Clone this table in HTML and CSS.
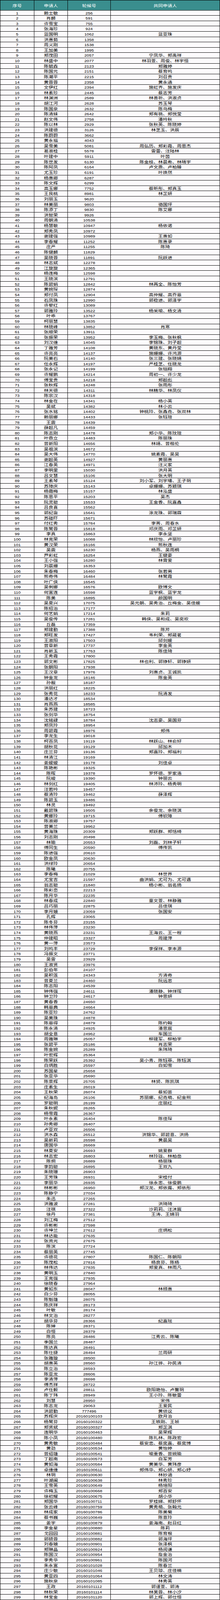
FILE: index.html
```html
<!DOCTYPE html>
<html lang="zh-CN">
<head>
<meta charset="utf-8">
<title>轮候名单</title>
<link rel="stylesheet" href="styles.css">
<script src="script.js"></script>
</head>
<body>
<table class="list">
<thead><tr><th>序号</th><th>申请人</th><th>轮候号</th><th>共同申请人</th></tr></thead>
<tbody>
<tr><td>1</td><td>赖士敏</td><td>256</td><td></td></tr>
<tr><td>2</td><td>肖麟</td><td>591</td><td></td></tr>
<tr><td>3</td><td>许雪宝</td><td>755</td><td></td></tr>
<tr><td>4</td><td>张海珍</td><td>924</td><td></td></tr>
<tr><td>5</td><td>蓝国明</td><td>1062</td><td>蓝亚珠</td></tr>
<tr><td>6</td><td>洪惠茹</td><td>1358</td><td></td></tr>
<tr><td>7</td><td>周义刚</td><td>1538</td><td></td></tr>
<tr><td>8</td><td>王加美</td><td>1995</td><td></td></tr>
<tr><td>9</td><td>郑茂田</td><td>2057</td><td>宁凤华、郑禹祥</td></tr>
<tr><td>10</td><td>林盛中</td><td>2077</td><td>林羽萱、周俊、林宇恒</td></tr>
<tr><td>11</td><td>陈毓森</td><td>2123</td><td>郑雅婷</td></tr>
<tr><td>12</td><td>陈国元</td><td>2151</td><td>蔡育鸣</td></tr>
<tr><td>13</td><td>陈潮平</td><td>2215</td><td>刘召贵</td></tr>
<tr><td>14</td><td>黄蓉蓉</td><td>2358</td><td>黄永通</td></tr>
<tr><td>15</td><td>文伊红</td><td>2394</td><td>施虹齐、施发庆</td></tr>
<tr><td>16</td><td>林素珍</td><td>2445</td><td>蔡志芳</td></tr>
<tr><td>17</td><td>林渊洲</td><td>2589</td><td>林善祈、洪淑贞</td></tr>
<tr><td>18</td><td>胡江河</td><td>2628</td><td>苏玉琴</td></tr>
<tr><td>19</td><td>陈国泉</td><td>2632</td><td>陈乌梅</td></tr>
<tr><td>20</td><td>陈清妹</td><td>2642</td><td>郑有祧、郑悦莹</td></tr>
<tr><td>21</td><td>赵文伟</td><td>2758</td><td>潘吟秋</td></tr>
<tr><td>22</td><td>陈以林</td><td>2929</td><td>张秋英、陈晓婷</td></tr>
<tr><td>23</td><td>洪建德</td><td>3126</td><td>林芝玉、洪辰</td></tr>
<tr><td>24</td><td>陈蔚蔚</td><td>3662</td><td></td></tr>
<tr><td>25</td><td>黄永福</td><td>4043</td><td></td></tr>
<tr><td>26</td><td>吴雪美</td><td>5081</td><td>周弘历、郑彩霞、周思杰</td></tr>
<tr><td>27</td><td>葛淑桂</td><td>5578</td><td>雷蕾、汪陆林</td></tr>
<tr><td>28</td><td>叶建中</td><td>5911</td><td>叶茵</td></tr>
<tr><td>29</td><td>陈世发</td><td>6130</td><td>陈金枝、林晨希、林晴宇</td></tr>
<tr><td>30</td><td>陈阿凤</td><td>6164</td><td>卢文质、卢柏臻</td></tr>
<tr><td>31</td><td>尤玉珍</td><td>6191</td><td>叶焕然</td></tr>
<tr><td>32</td><td>杨惠卿</td><td>6287</td><td></td></tr>
<tr><td>33</td><td>陈文辉</td><td>6299</td><td></td></tr>
<tr><td>34</td><td>高玉娜</td><td>7752</td><td>蔡昕彤、郑真玉</td></tr>
<tr><td>35</td><td>王艮桃</td><td>8981</td><td>林芷妍</td></tr>
<tr><td>36</td><td>刘丽玉</td><td>9620</td><td></td></tr>
<tr><td>37</td><td>林美丽</td><td>9803</td><td>骆国坪</td></tr>
<tr><td>38</td><td>陈添丁</td><td>9830</td><td>陈艾娜</td></tr>
<tr><td>39</td><td>洪智荣</td><td>9926</td><td></td></tr>
<tr><td>40</td><td>周朝清</td><td>10538</td><td></td></tr>
<tr><td>41</td><td>杨慧敏</td><td>10947</td><td>杨依诺</td></tr>
<tr><td>42</td><td>郑秀凤</td><td>10972</td><td></td></tr>
<tr><td>43</td><td>谢建强</td><td>10989</td><td>王惠如</td></tr>
<tr><td>44</td><td>李春耀</td><td>11252</td><td>陈惠录</td></tr>
<tr><td>45</td><td>庄严</td><td>11255</td><td>陈琦</td></tr>
<tr><td>46</td><td>陈健麟</td><td>11829</td><td></td></tr>
<tr><td>47</td><td>吴晓蓉</td><td>11891</td><td>阮跃进</td></tr>
<tr><td>48</td><td>林志斌</td><td>12278</td><td></td></tr>
<tr><td>49</td><td>江旋旋</td><td>12365</td><td></td></tr>
<tr><td>50</td><td>杨连梅</td><td>12598</td><td></td></tr>
<tr><td>51</td><td>王晓滨</td><td>12791</td><td></td></tr>
<tr><td>52</td><td>陈碧娟</td><td>12842</td><td>林两全、陈怡芳</td></tr>
<tr><td>53</td><td>黄婉琛</td><td>12874</td><td></td></tr>
<tr><td>54</td><td>郑付凤</td><td>12904</td><td>高仲耀、高乔恩</td></tr>
<tr><td>55</td><td>石凤珠</td><td>12990</td><td>郭稳进、郭泽宇</td></tr>
<tr><td>56</td><td>许黎红</td><td>13089</td><td></td></tr>
<tr><td>57</td><td>郭雅玲</td><td>13522</td><td>杨采喻、杨文清</td></tr>
<tr><td>58</td><td>叶乖</td><td>13767</td><td></td></tr>
<tr><td>59</td><td>柯丽慧</td><td>13835</td><td></td></tr>
<tr><td>60</td><td>林晓峰</td><td>13852</td><td>肖寒</td></tr>
<tr><td>61</td><td>张顺荣</td><td>13911</td><td></td></tr>
<tr><td>62</td><td>张振荣</td><td>13952</td><td>李玉梅、张秋枫</td></tr>
<tr><td>63</td><td>刘汉维</td><td>14045</td><td>李锦珠、刘子超</td></tr>
<tr><td>64</td><td>丁雅芳</td><td>14108</td><td>黄晓东、黄丹莹</td></tr>
<tr><td>65</td><td>许亮亮</td><td>14137</td><td>施姗姗、许鸿源</td></tr>
<tr><td>66</td><td>阮美石</td><td>14140</td><td>张三建、张晓婧</td></tr>
<tr><td>67</td><td>任永辉</td><td>14197</td><td>严桂芝、任晓龙</td></tr>
<tr><td>68</td><td>张永记</td><td>14199</td><td>张铠翔</td></tr>
<tr><td>69</td><td>许耀鹏</td><td>14214</td><td>周初一、许少龙</td></tr>
<tr><td>70</td><td>傅宝贵</td><td>14218</td><td>郑超彪</td></tr>
<tr><td>71</td><td>张秋辉</td><td>14248</td><td>张雨彤</td></tr>
<tr><td>72</td><td>林天德</td><td>14311</td><td>林精华、林凤仪</td></tr>
<tr><td>73</td><td>陈宗汉</td><td>14318</td><td></td></tr>
<tr><td>74</td><td>林金在</td><td>14341</td><td>杨小英</td></tr>
<tr><td>75</td><td>吴斌</td><td>14382</td><td>林小云</td></tr>
<tr><td>76</td><td>张水铭</td><td>14402</td><td>钟桃玲、张鑫垚、张双林</td></tr>
<tr><td>77</td><td>赖丽娜</td><td>14433</td><td>张钰瑄</td></tr>
<tr><td>78</td><td>王震</td><td>14439</td><td></td></tr>
<tr><td>79</td><td>薛超凡</td><td>14459</td><td></td></tr>
<tr><td>80</td><td>陈志刚</td><td>14478</td><td>郑小华、陈玟瑄</td></tr>
<tr><td>81</td><td>叶鼎立</td><td>14483</td><td>陈丽珠</td></tr>
<tr><td>82</td><td>曾新阳</td><td>14656</td><td>林靖、曾楷伦</td></tr>
<tr><td>83</td><td>吴祖滨</td><td>14672</td><td></td></tr>
<tr><td>84</td><td>吴大伟</td><td>14770</td><td>姚素霞、吴昊</td></tr>
<tr><td>85</td><td>谢超英</td><td>14927</td><td>黄丽惠</td></tr>
<tr><td>86</td><td>江春英</td><td>14971</td><td>汪义家</td></tr>
<tr><td>87</td><td>李明里</td><td>15030</td><td>洪月英</td></tr>
<tr><td>88</td><td>吕文慧</td><td>15106</td><td>张大明</td></tr>
<tr><td>89</td><td>王素琴</td><td>15124</td><td>刘小军、刘宇璠、王子玥</td></tr>
<tr><td>90</td><td>苏璋庆</td><td>15143</td><td>卓姗姗、苏颖琪</td></tr>
<tr><td>91</td><td>杨霜梅</td><td>15157</td><td>林泓盛</td></tr>
<tr><td>92</td><td>陈思平</td><td>15203</td><td>吴杰</td></tr>
<tr><td>93</td><td>阮灵聪</td><td>15533</td><td>王金香、阮嘉鑫</td></tr>
<tr><td>94</td><td>吕良喜</td><td>15562</td><td></td></tr>
<tr><td>95</td><td>郭纪畲</td><td>15641</td><td>涂龙珠、郭瑞霖</td></tr>
<tr><td>96</td><td>苏碰吓</td><td>15671</td><td></td></tr>
<tr><td>97</td><td>付红秀</td><td>15784</td><td>李菁、周春水</td></tr>
<tr><td>98</td><td>陈鹭蓉</td><td>15818</td><td>邓庆雨、邓芷妍</td></tr>
<tr><td>99</td><td>李真</td><td>15863</td><td>李永坚</td></tr>
<tr><td>100</td><td>林克荣</td><td>16088</td><td>林欣怡、卢丽珍</td></tr>
<tr><td>101</td><td>黄汉荣</td><td>16166</td><td>熊秋连</td></tr>
<tr><td>102</td><td>吴震</td><td>16230</td><td>杨燕、吴雨桐</td></tr>
<tr><td>103</td><td>芦彩虹</td><td>16254</td><td>王键豪</td></tr>
<tr><td>104</td><td>王小强</td><td>16280</td><td>林霄爱</td></tr>
<tr><td>105</td><td>刘晨姗</td><td>16353</td><td></td></tr>
<tr><td>106</td><td>朱春梅</td><td>16460</td><td>张若男</td></tr>
<tr><td>107</td><td>熊奇伟</td><td>16484</td><td>林鹭霞</td></tr>
<tr><td>108</td><td>叶广侠</td><td>16545</td><td></td></tr>
<tr><td>109</td><td>吴俐娜</td><td>16576</td><td>欧博文</td></tr>
<tr><td>110</td><td>何富连</td><td>16598</td><td>蓝宇枫、蓝宇龙</td></tr>
<tr><td>111</td><td>陈美</td><td>16895</td><td>颜国明</td></tr>
<tr><td>112</td><td>吴夏兴</td><td>17075</td><td>吴元朝、吴秀治、丘梅金、吴佳媛</td></tr>
<tr><td>113</td><td>陈招治</td><td>17177</td><td></td></tr>
<tr><td>114</td><td>何艺娟</td><td>17214</td><td>朱莉</td></tr>
<tr><td>115</td><td>吴俊传</td><td>17281</td><td>韩侠、吴和成、吴奕欢</td></tr>
<tr><td>116</td><td>丘磊</td><td>17359</td><td></td></tr>
<tr><td>117</td><td>郑建勤</td><td>17388</td><td>陈芹</td></tr>
<tr><td>118</td><td>郑旺发</td><td>17427</td><td>韦利荣、郑葳茗</td></tr>
<tr><td>119</td><td>王淑阳</td><td>17503</td><td>邱剑媛</td></tr>
<tr><td>120</td><td>曾章新</td><td>17737</td><td>李金英</td></tr>
<tr><td>121</td><td>肖新玉</td><td>17763</td><td>陈佳琦</td></tr>
<tr><td>122</td><td>王秀霞</td><td>17800</td><td></td></tr>
<tr><td>123</td><td>郭文彬</td><td>17825</td><td>林也利、郭铮轩、郭铮妍</td></tr>
<tr><td>124</td><td>张朝阳</td><td>17938</td><td></td></tr>
<tr><td>125</td><td>王汉章</td><td>17976</td><td>刘惠贞、王诚凯</td></tr>
<tr><td>126</td><td>钟金龙</td><td>18146</td><td>陈金英</td></tr>
<tr><td>127</td><td>孙靓</td><td>18187</td><td></td></tr>
<tr><td>128</td><td>洪丽红</td><td>18225</td><td></td></tr>
<tr><td>129</td><td>张秀花</td><td>18233</td><td>阮清发</td></tr>
<tr><td>130</td><td>潘达才</td><td>18534</td><td></td></tr>
<tr><td>131</td><td>肖燕燕</td><td>18585</td><td></td></tr>
<tr><td>132</td><td>朱苏建</td><td>18723</td><td></td></tr>
<tr><td>133</td><td>张剑华</td><td>18754</td><td></td></tr>
<tr><td>134</td><td>沈铭肆</td><td>18784</td><td>沈志豪、吴国芬</td></tr>
<tr><td>135</td><td>郑凤玲</td><td>18954</td><td></td></tr>
<tr><td>136</td><td>周碧霞</td><td>18976</td><td>郑伟</td></tr>
<tr><td>137</td><td>李龙生</td><td>19018</td><td></td></tr>
<tr><td>138</td><td>柯百凤</td><td>19119</td><td>林跃山、林俞好</td></tr>
<tr><td>139</td><td>胡秋花</td><td>19129</td><td>邱加木</td></tr>
<tr><td>140</td><td>庄兰芬</td><td>19136</td><td>郑嘉玲、郑福利</td></tr>
<tr><td>141</td><td>林清江</td><td>19169</td><td></td></tr>
<tr><td>142</td><td>姜嫒嫒</td><td>19178</td><td>刘佳卓</td></tr>
<tr><td>143</td><td>陈艳彬</td><td>19325</td><td></td></tr>
<tr><td>144</td><td>陈晖</td><td>19378</td><td>罗怀德、罗家浩</td></tr>
<tr><td>145</td><td>阮峻</td><td>19390</td><td>钟丽云</td></tr>
<tr><td>146</td><td>林剑红</td><td>19405</td><td>林沛玲、杨秀明</td></tr>
<tr><td>147</td><td>汪若吟</td><td>19457</td><td></td></tr>
<tr><td>148</td><td>蔡清玲</td><td>19462</td><td>薛泽辉</td></tr>
<tr><td>149</td><td>陈碧玉</td><td>19486</td><td></td></tr>
<tr><td>150</td><td>林灵</td><td>19492</td><td></td></tr>
<tr><td>151</td><td>戴碧珠</td><td>19505</td><td>余俊龙、余晓淇</td></tr>
<tr><td>152</td><td>黄娜玲</td><td>19715</td><td>傅钦障</td></tr>
<tr><td>153</td><td>陈淑卿</td><td>19757</td><td></td></tr>
<tr><td>154</td><td>曾美兰</td><td>19962</td><td></td></tr>
<tr><td>155</td><td>黄海珠</td><td>20309</td><td>郑跃群、郑恬绮</td></tr>
<tr><td>156</td><td>刘志刚</td><td>20498</td><td></td></tr>
<tr><td>157</td><td>林瑜</td><td>20553</td><td>刘磊、刘林子轩</td></tr>
<tr><td>158</td><td>傅同生</td><td>20590</td><td>傅传凯</td></tr>
<tr><td>159</td><td>陈进强</td><td>20610</td><td></td></tr>
<tr><td>160</td><td>欧金凤</td><td>20630</td><td></td></tr>
<tr><td>161</td><td>洪绿玲</td><td>20654</td><td></td></tr>
<tr><td>162</td><td>陈曦</td><td>20755</td><td></td></tr>
<tr><td>163</td><td>李春梅</td><td>21029</td><td>林世界</td></tr>
<tr><td>164</td><td>尤宝吉</td><td>21597</td><td>曲洪娟、尤可为、尤可遇</td></tr>
<tr><td>165</td><td>翁志聪</td><td>21840</td><td>杨小彬、翁名扬</td></tr>
<tr><td>166</td><td>陈彩恋</td><td>22213</td><td></td></tr>
<tr><td>167</td><td>陈月华</td><td>22235</td><td></td></tr>
<tr><td>168</td><td>林春成</td><td>22840</td><td>童文萱、林静雅</td></tr>
<tr><td>169</td><td>吕巧丽</td><td>22875</td><td>吕佳琪</td></tr>
<tr><td>170</td><td>李月娥</td><td>23059</td><td>张国安</td></tr>
<tr><td>171</td><td>孔辉</td><td>23065</td><td></td></tr>
<tr><td>172</td><td>陈冬芬</td><td>23155</td><td></td></tr>
<tr><td>173</td><td>林伟萍</td><td>23230</td><td></td></tr>
<tr><td>174</td><td>黄晓燕</td><td>23231</td><td>王海云、王一程</td></tr>
<tr><td>175</td><td>仲建昭</td><td>23327</td><td>周建萍</td></tr>
<tr><td>176</td><td>黄一萍</td><td>23573</td><td></td></tr>
<tr><td>177</td><td>刘鸣丰</td><td>23729</td><td>李保祥、李本源</td></tr>
<tr><td>178</td><td>冯振文</td><td>23771</td><td></td></tr>
<tr><td>179</td><td>吴雷</td><td>23929</td><td></td></tr>
<tr><td>180</td><td>王淑贤</td><td>23976</td><td></td></tr>
<tr><td>181</td><td>彭伯年</td><td>24107</td><td></td></tr>
<tr><td>182</td><td>吴积莲</td><td>24343</td><td>方清奇</td></tr>
<tr><td>183</td><td>曾夏兰</td><td>24460</td><td>阮远忠</td></tr>
<tr><td>184</td><td>陈志阳</td><td>24539</td><td></td></tr>
<tr><td>185</td><td>钟伟强</td><td>24611</td><td>潘晓静、钟烊珲</td></tr>
<tr><td>186</td><td>钟卫玲</td><td>24617</td><td>钟思妍</td></tr>
<tr><td>187</td><td>黄春香</td><td>24650</td><td></td></tr>
<tr><td>188</td><td>韩恩典</td><td>24664</td><td></td></tr>
<tr><td>189</td><td>陈亚珍</td><td>24762</td><td></td></tr>
<tr><td>190</td><td>吴美珠</td><td>24878</td><td></td></tr>
<tr><td>191</td><td>陈恩得</td><td>24879</td><td>陈约翰</td></tr>
<tr><td>192</td><td>陈永清</td><td>24925</td><td>潘思宸</td></tr>
<tr><td>193</td><td>胡全意</td><td>24962</td><td>车国兰</td></tr>
<tr><td>194</td><td>周雅琳</td><td>25057</td><td>柳建军、柳柏宇</td></tr>
<tr><td>195</td><td>张碧平</td><td>25186</td><td>肖志荣</td></tr>
<tr><td>196</td><td>陈金婉</td><td>25289</td><td>朱玮琦</td></tr>
<tr><td>197</td><td>叶宏辉</td><td>25364</td><td></td></tr>
<tr><td>198</td><td>陈荣跃</td><td>25392</td><td>吴小青、陈钰菲、陈钰淇</td></tr>
<tr><td>199</td><td>白炳胜</td><td>25597</td><td>白如雪</td></tr>
<tr><td>200</td><td>苏国星</td><td>25658</td><td></td></tr>
<tr><td>201</td><td>张亚华</td><td>25690</td><td></td></tr>
<tr><td>202</td><td>陈景辉</td><td>25705</td><td>林赟、陈凯琪</td></tr>
<tr><td>203</td><td>庄素生</td><td>26019</td><td></td></tr>
<tr><td>204</td><td>王秋荣</td><td>26074</td><td>蔡如芸</td></tr>
<tr><td>205</td><td>纪海岛</td><td>26106</td><td>苏丽娜、纪垚萌、纪金熙</td></tr>
<tr><td>206</td><td>罗聪明</td><td>26199</td><td>庄丽红</td></tr>
<tr><td>207</td><td>朱秋妮</td><td>26265</td><td></td></tr>
<tr><td>208</td><td>杨雪霞</td><td>26367</td><td></td></tr>
<tr><td>209</td><td>叶永素</td><td>26404</td><td>陈佳琛</td></tr>
<tr><td>210</td><td>孙秀卿</td><td>26407</td><td></td></tr>
<tr><td>211</td><td>卢亚双</td><td>26506</td><td></td></tr>
<tr><td>212</td><td>洪水森</td><td>26512</td><td>洪锦华、郭碧意、洪扬</td></tr>
<tr><td>213</td><td>吴新莉</td><td>26598</td><td>黄晨昊</td></tr>
<tr><td>214</td><td>唐国华</td><td>26669</td><td></td></tr>
<tr><td>215</td><td>林夏安</td><td>26693</td><td>姚爱群</td></tr>
<tr><td>216</td><td>林志宏</td><td>26803</td><td>林玲珑、林柏岳</td></tr>
<tr><td>217</td><td>陈炯</td><td>26889</td><td>杨丽珠</td></tr>
<tr><td>218</td><td>李韵聪</td><td>26895</td><td>王双九</td></tr>
<tr><td>219</td><td>朱晓珊</td><td>26903</td><td></td></tr>
<tr><td>220</td><td>王芳珠</td><td>26931</td><td>宋桂付</td></tr>
<tr><td>221</td><td>李丽华</td><td>26935</td><td>徐永忠、徐俊鹏</td></tr>
<tr><td>222</td><td>林彬彬</td><td>26950</td><td>郑汉龙、郑依露、郑依彤</td></tr>
<tr><td>223</td><td>陈静宁</td><td>27034</td><td></td></tr>
<tr><td>224</td><td>朱迅</td><td>27265</td><td></td></tr>
<tr><td>225</td><td>洪雅波</td><td>27281</td><td>洪琦琦</td></tr>
<tr><td>226</td><td>汪祺</td><td>27322</td><td>沙莉莉、汪沐宸</td></tr>
<tr><td>227</td><td>徐丹</td><td>27381</td><td>王涛、王婧羽</td></tr>
<tr><td>228</td><td>刘江梅</td><td>27512</td><td></td></tr>
<tr><td>229</td><td>许彬彬</td><td>27598</td><td></td></tr>
<tr><td>230</td><td>许坤兰</td><td>27612</td><td>庄炳松</td></tr>
<tr><td>231</td><td>林达能</td><td>27635</td><td></td></tr>
<tr><td>232</td><td>张资光</td><td>27675</td><td></td></tr>
<tr><td>233</td><td>陈滨</td><td>27724</td><td></td></tr>
<tr><td>234</td><td>蔡丽英</td><td>27745</td><td></td></tr>
<tr><td>235</td><td>许德花</td><td>27807</td><td>陈国仁、陈朝阳</td></tr>
<tr><td>236</td><td>陈茂松</td><td>27816</td><td>杨良芬、陈杨</td></tr>
<tr><td>237</td><td>林伟达</td><td>27835</td><td>郑爱真、林雨凡</td></tr>
<tr><td>238</td><td>黄明玉</td><td>27840</td><td></td></tr>
<tr><td>239</td><td>王克强</td><td>27935</td><td></td></tr>
<tr><td>240</td><td>徐晓春</td><td>27964</td><td></td></tr>
<tr><td>241</td><td>黄如东</td><td>28047</td><td>林颀惠</td></tr>
<tr><td>242</td><td>白少芬</td><td>28055</td><td></td></tr>
<tr><td>243</td><td>陈魁雄</td><td>28075</td><td></td></tr>
<tr><td>244</td><td>陈庆祥</td><td>28173</td><td></td></tr>
<tr><td>245</td><td>叶敏</td><td>28174</td><td></td></tr>
<tr><td>246</td><td>林文治</td><td>28277</td><td></td></tr>
<tr><td>247</td><td>胡华芬</td><td>28366</td><td>纪嘉瑶</td></tr>
<tr><td>248</td><td>陈婵</td><td>28371</td><td></td></tr>
<tr><td>249</td><td>白恒</td><td>28379</td><td></td></tr>
<tr><td>250</td><td>陈亮</td><td>28486</td><td>江秀云、陈曦</td></tr>
<tr><td>251</td><td>季国兰</td><td>28487</td><td></td></tr>
<tr><td>252</td><td>陈达真</td><td>28491</td><td></td></tr>
<tr><td>253</td><td>陈仕捷</td><td>28494</td><td>兰周研</td></tr>
<tr><td>254</td><td>张雅璇</td><td>28500</td><td></td></tr>
<tr><td>255</td><td>胡惠英</td><td>28560</td><td>孙江骅、孙民清</td></tr>
<tr><td>256</td><td>陈立治</td><td>28593</td><td></td></tr>
<tr><td>257</td><td>陈亚龙</td><td>28606</td><td></td></tr>
<tr><td>258</td><td>李清萍</td><td>28698</td><td></td></tr>
<tr><td>259</td><td>傅杰祥</td><td>28722</td><td></td></tr>
<tr><td>260</td><td>卢任毅</td><td>28811</td><td>欧阳艳怡、卢馨玥</td></tr>
<tr><td>261</td><td>陈丁玮</td><td>28949</td><td>王小玲、陈敏蕾</td></tr>
<tr><td>262</td><td>刘慧</td><td>28950</td><td>宋伟</td></tr>
<tr><td>263</td><td>陈志龙</td><td>29063</td><td>王爱民</td></tr>
<tr><td>264</td><td>洪碧勤</td><td>777496</td><td>黄侦议</td></tr>
<tr><td>265</td><td>苏辉庆</td><td>20160100103</td><td>欧月治</td></tr>
<tr><td>266</td><td>杨鹭芬</td><td>20160100322</td><td>王铁刚、王祯</td></tr>
<tr><td>267</td><td>郑贤斌</td><td>20160100327</td><td>郑芷淇</td></tr>
<tr><td>268</td><td>连明华</td><td>20160100463</td><td>吴荣辉</td></tr>
<tr><td>269</td><td>陈小凤</td><td>20160100480</td><td>陈礼林、陈政宏</td></tr>
<tr><td>270</td><td>黄秀敏</td><td>20160100484</td><td>蔡安忠、蔡奕嘉、蔡奕博</td></tr>
<tr><td>271</td><td>黄劲</td><td>20160100534</td><td>黄怡婷</td></tr>
<tr><td>272</td><td>曾绍雄</td><td>20160100541</td><td>喻重香、曾婉瑜</td></tr>
<tr><td>273</td><td>丁超南</td><td>20160100573</td><td>白军芳</td></tr>
<tr><td>274</td><td>黄如海</td><td>20160100584</td><td>黄美华、黄玮彦</td></tr>
<tr><td>275</td><td>卓维维</td><td>20160100611</td><td>郑伟华、郑心妍、郑心妤</td></tr>
<tr><td>276</td><td>林玥</td><td>20160100630</td><td>林妙涵</td></tr>
<tr><td>277</td><td>叶湖闽</td><td>20160100638</td><td>林秀珍</td></tr>
<tr><td>278</td><td>王雪英</td><td>20160100649</td><td>杨培阳</td></tr>
<tr><td>279</td><td>许梅玉</td><td>20160100668</td><td>郑百安</td></tr>
<tr><td>280</td><td>徐初耀</td><td>20160100675</td><td>胡小华</td></tr>
<tr><td>281</td><td>郑国华</td><td>20160100711</td><td>罗桂娣、郑舒怀</td></tr>
<tr><td>282</td><td>张云峰</td><td>20160100759</td><td>黄秀萌、张翰元</td></tr>
<tr><td>283</td><td>林成家</td><td>20160100786</td><td>陈美菊</td></tr>
<tr><td>284</td><td>蔡书巍</td><td>20160100849</td><td>陈意玲</td></tr>
<tr><td>285</td><td>姜宇</td><td>20160100879</td><td>姜海南、赵日红</td></tr>
<tr><td>286</td><td>李金星</td><td>20160100880</td><td>陈莉</td></tr>
<tr><td>287</td><td>戈园园</td><td>20160100881</td><td>陈育根</td></tr>
<tr><td>288</td><td>郭硕蓉</td><td>20160100882</td><td>郭海坪</td></tr>
<tr><td>289</td><td>刘春娥</td><td>20160100901</td><td>张泽枫</td></tr>
<tr><td>290</td><td>郑琳晶</td><td>20160100924</td><td>杨阅谦</td></tr>
<tr><td>291</td><td>陈国汉</td><td>20160100954</td><td>詹金治</td></tr>
<tr><td>292</td><td>李秀华</td><td>20160100961</td><td>陈国河</td></tr>
<tr><td>293</td><td>朱永富</td><td>20160101028</td><td>陈春兰</td></tr>
<tr><td>294</td><td>庄少敏</td><td>20160101046</td><td>王贝琼、庄佳楠</td></tr>
<tr><td>295</td><td>黄亚四</td><td>20160101064</td><td>林文涛</td></tr>
<tr><td>296</td><td>施秋泉</td><td>20160101085</td><td>林秀英</td></tr>
<tr><td>297</td><td>王政</td><td>20160101112</td><td>郭谨萱、郭涛</td></tr>
<tr><td>298</td><td>林秋荣</td><td>20160101114</td><td>林芙蓉、林小汐</td></tr>
<tr><td>299</td><td>林宝金</td><td>20160101120</td><td>郭上辉、郭仕恒</td></tr>
</tbody>
</table>
</body>
</html>
```

FILE: styles.css
```css
/* --fit: ratio that makes the 5116px-tall sheet fit the window height (set by script.js).
   Row lines stay 1px and crisp; only the cell contents are scaled. */
:root {
  --fit: 1;
}

html, body {
  margin: 0;
  padding: 0;
  background: #ffffff;
}

.list {
  display: block;
  box-sizing: border-box;
  width: 564px;
  border-top: 1px solid #000000;
  border-left: 1px solid #000000;
  border-spacing: 0;
  background: #fdfbfd;
  color: #000000;
  font-family: "Noto Sans CJK SC", "Liberation Sans", sans-serif;
  font-size: 12px;
}

.list thead,
.list tbody {
  display: block;
}

.list tr {
  display: grid;
  grid-template-columns: 87px 86px 110px 280px;
  box-sizing: border-box;
  height: calc(17px * var(--fit));
  border-bottom: 1px solid #000000;
}

.list thead tr {
  height: calc(32px * var(--fit));
}

.list th,
.list td {
  display: block;
  box-sizing: border-box;
  padding: 0;
  border-right: 1px solid #000000;
  text-align: center;
  white-space: nowrap;
  transform: scale(1, var(--fit));
  transform-origin: 0 0;
}

.list td {
  height: calc(17px - 1px / var(--fit));
  line-height: 16px;
}

.list th {
  height: calc(32px - 1px / var(--fit));
  background: #3a8e8e;
  color: #ffffff;
  font-weight: normal;
  font-size: 12px;
  line-height: 31px;
}

.list td:nth-child(1),
.list td:nth-child(3) {
  font-family: "Liberation Sans", sans-serif;
  font-size: 11px;
  padding-top: 1px;
}
```

FILE: script.js
```js
(function () {
  var SHEET_HEIGHT = 5116;

  function fit() {
    var h = window.innerHeight;
    if (!h) { return; }
    /* the 1px top border of the sheet does not scale */
    var k = Math.min(1, (h - 1) / (SHEET_HEIGHT - 1));
    document.documentElement.style.setProperty('--fit', String(k));
  }

  fit();
  window.addEventListener('resize', fit);
  document.addEventListener('DOMContentLoaded', fit);
})();
```
